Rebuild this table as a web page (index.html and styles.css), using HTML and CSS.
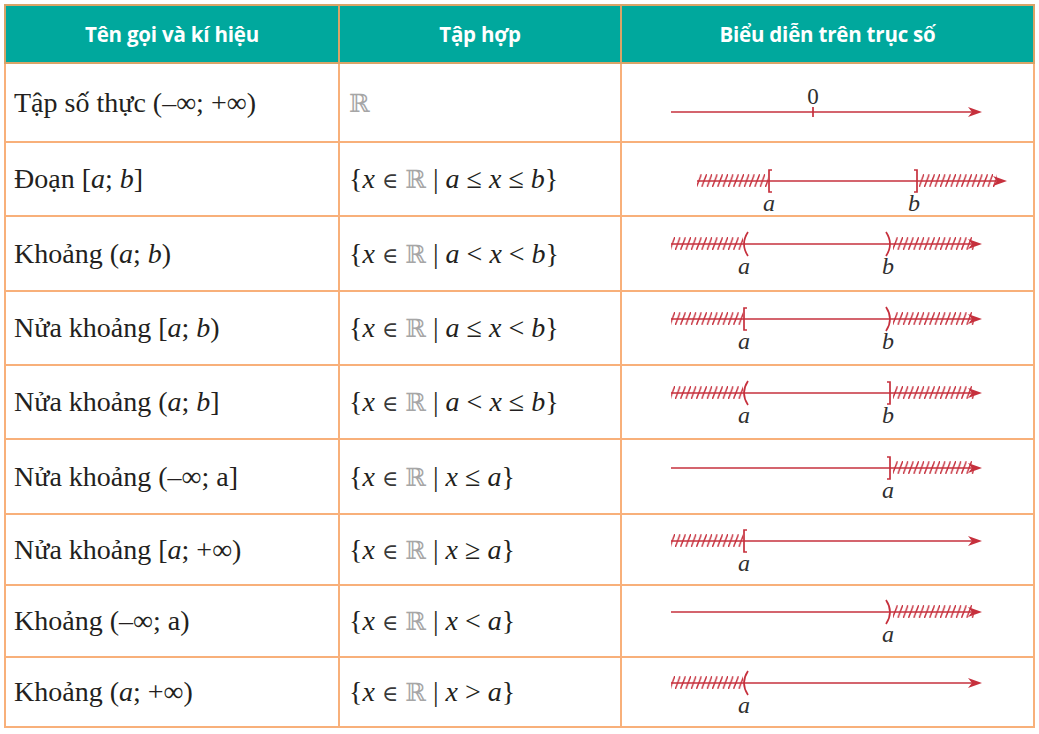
FILE: index.html
```html
<!DOCTYPE html>
<html lang="vi">
<head>
<meta charset="utf-8">
<title>Các tập con của tập số thực</title>
<link rel="stylesheet" href="styles.css">
</head>
<body>
<svg class="defs" width="0" height="0" aria-hidden="true">
  <defs>
    <pattern id="hatch" patternUnits="userSpaceOnUse" x="0" y="-7" width="5.3" height="13">
      <line class="hl" x1="0.5" y1="12.5" x2="5" y2="0.5"/>
    </pattern>
  </defs>
</svg>
<table class="tbl">
  <colgroup><col class="c1"><col class="c2"><col class="c3"></colgroup>
  <thead>
    <tr><th>Tên gọi và kí hiệu</th><th>Tập hợp</th><th>Biểu diễn trên trục số</th></tr>
  </thead>
  <tbody>
    <tr>
      <td class="name">Tập số thực (–∞; +∞)</td>
      <td class="set"><span class="bb">ℝ</span></td>
      <td class="axis">
        <svg class="nl" width="411" height="77" viewBox="0 0 411 77"><g transform="translate(0 48)">
          <line class="ax" x1="49" y1="0" x2="350" y2="0"/>
          <path class="ah" d="M360 0 L346 -5 L350 0 L346 5Z"/>
          <line class="ax" x1="191" y1="-5" x2="191" y2="5"/>
          <text class="zr" x="191" y="-8">0</text>
        </g></svg>
      </td>
    </tr>
    <tr>
      <td class="name">Đoạn [<i>a</i>; <i>b</i>]</td>
      <td class="set">{<i>x</i> <span class="el">∈</span> <span class="bb">ℝ</span> | <i>a</i> ≤ <i>x</i> ≤ <i>b</i>}</td>
      <td class="axis">
        <svg class="nl" width="411" height="72" viewBox="0 0 411 72"><g transform="translate(0 38)">
          <rect x="75" y="-7" width="71" height="13" fill="url(#hatch)"/>
          <rect x="297" y="-7" width="78" height="13" fill="url(#hatch)"/>
          <line class="ax" x1="75" y1="0" x2="375" y2="0"/>
          <path class="ah" d="M385 0 L371 -5 L375 0 L371 5Z"/>
          <path class="br" d="M150 -11 H147 V11 H150"/>
          <path class="br" d="M292 -11 H295 V11 H292"/>
          <text class="lb" x="147" y="30">a</text>
          <text class="lb" x="292" y="30">b</text>
        </g></svg>
      </td>
    </tr>
    <tr>
      <td class="name">Khoảng (<i>a</i>; <i>b</i>)</td>
      <td class="set">{<i>x</i> <span class="el">∈</span> <span class="bb">ℝ</span> | <i>a</i> &lt; <i>x</i> &lt; <i>b</i>}</td>
      <td class="axis">
        <svg class="nl" width="411" height="73" viewBox="0 0 411 73"><g transform="translate(0 27)">
          <rect x="49" y="-7" width="72" height="13" fill="url(#hatch)"/>
          <rect x="271" y="-7" width="81" height="13" fill="url(#hatch)"/>
          <line class="ax" x1="49" y1="0" x2="350" y2="0"/>
          <path class="ah" d="M360 0 L346 -5 L350 0 L346 5Z"/>
          <path class="br" d="M126 -12 Q118 0 126 12"/>
          <path class="br" d="M264 -12 Q272 0 264 12"/>
          <text class="lb" x="122" y="30">a</text>
          <text class="lb" x="266" y="30">b</text>
        </g></svg>
      </td>
    </tr>
    <tr>
      <td class="name">Nửa khoảng [<i>a</i>; <i>b</i>)</td>
      <td class="set">{<i>x</i> <span class="el">∈</span> <span class="bb">ℝ</span> | <i>a</i> ≤ <i>x</i> &lt; <i>b</i>}</td>
      <td class="axis">
        <svg class="nl" width="411" height="72" viewBox="0 0 411 72"><g transform="translate(0 27)">
          <rect x="49" y="-7" width="72" height="13" fill="url(#hatch)"/>
          <rect x="271" y="-7" width="81" height="13" fill="url(#hatch)"/>
          <line class="ax" x1="49" y1="0" x2="350" y2="0"/>
          <path class="ah" d="M360 0 L346 -5 L350 0 L346 5Z"/>
          <path class="br" d="M125 -11 H122 V11 H125"/>
          <path class="br" d="M264 -12 Q272 0 264 12"/>
          <text class="lb" x="122" y="30">a</text>
          <text class="lb" x="266" y="30">b</text>
        </g></svg>
      </td>
    </tr>
    <tr>
      <td class="name">Nửa khoảng (<i>a</i>; <i>b</i>]</td>
      <td class="set">{<i>x</i> <span class="el">∈</span> <span class="bb">ℝ</span> | <i>a</i> &lt; <i>x</i> ≤ <i>b</i>}</td>
      <td class="axis">
        <svg class="nl" width="411" height="72" viewBox="0 0 411 72"><g transform="translate(0 27)">
          <rect x="49" y="-7" width="72" height="13" fill="url(#hatch)"/>
          <rect x="271" y="-7" width="81" height="13" fill="url(#hatch)"/>
          <line class="ax" x1="49" y1="0" x2="350" y2="0"/>
          <path class="ah" d="M360 0 L346 -5 L350 0 L346 5Z"/>
          <path class="br" d="M126 -12 Q118 0 126 12"/>
          <path class="br" d="M265 -11 H268 V11 H265"/>
          <text class="lb" x="122" y="30">a</text>
          <text class="lb" x="266" y="30">b</text>
        </g></svg>
      </td>
    </tr>
    <tr>
      <td class="name">Nửa khoảng (–∞; a]</td>
      <td class="set">{<i>x</i> <span class="el">∈</span> <span class="bb">ℝ</span> | <i>x</i> ≤ <i>a</i>}</td>
      <td class="axis">
        <svg class="nl" width="411" height="73" viewBox="0 0 411 73"><g transform="translate(0 28)">
          <rect x="271" y="-7" width="81" height="13" fill="url(#hatch)"/>
          <line class="ax" x1="49" y1="0" x2="350" y2="0"/>
          <path class="ah" d="M360 0 L346 -5 L350 0 L346 5Z"/>
          <path class="br" d="M265 -11 H268 V11 H265"/>
          <text class="lb" x="266" y="30">a</text>
        </g></svg>
      </td>
    </tr>
    <tr>
      <td class="name">Nửa khoảng [<i>a</i>; +∞)</td>
      <td class="set">{<i>x</i> <span class="el">∈</span> <span class="bb">ℝ</span> | <i>x</i> ≥ <i>a</i>}</td>
      <td class="axis">
        <svg class="nl" width="411" height="69" viewBox="0 0 411 69"><g transform="translate(0 26)">
          <rect x="49" y="-7" width="72" height="13" fill="url(#hatch)"/>
          <line class="ax" x1="49" y1="0" x2="350" y2="0"/>
          <path class="ah" d="M360 0 L346 -5 L350 0 L346 5Z"/>
          <path class="br" d="M125 -11 H122 V11 H125"/>
          <text class="lb" x="122" y="30">a</text>
        </g></svg>
      </td>
    </tr>
    <tr>
      <td class="name">Khoảng (–∞; a)</td>
      <td class="set">{<i>x</i> <span class="el">∈</span> <span class="bb">ℝ</span> | <i>x</i> &lt; <i>a</i>}</td>
      <td class="axis">
        <svg class="nl" width="411" height="70" viewBox="0 0 411 70"><g transform="translate(0 26)">
          <rect x="271" y="-7" width="81" height="13" fill="url(#hatch)"/>
          <line class="ax" x1="49" y1="0" x2="350" y2="0"/>
          <path class="ah" d="M360 0 L346 -5 L350 0 L346 5Z"/>
          <path class="br" d="M264 -12 Q272 0 264 12"/>
          <text class="lb" x="266" y="30">a</text>
        </g></svg>
      </td>
    </tr>
    <tr>
      <td class="name">Khoảng (<i>a</i>; +∞)</td>
      <td class="set">{<i>x</i> <span class="el">∈</span> <span class="bb">ℝ</span> | <i>x</i> &gt; <i>a</i>}</td>
      <td class="axis">
        <svg class="nl" width="411" height="68" viewBox="0 0 411 68"><g transform="translate(0 25)">
          <rect x="49" y="-7" width="72" height="13" fill="url(#hatch)"/>
          <line class="ax" x1="49" y1="0" x2="350" y2="0"/>
          <path class="ah" d="M360 0 L346 -5 L350 0 L346 5Z"/>
          <path class="br" d="M126 -12 Q118 0 126 12"/>
          <text class="lb" x="122" y="30">a</text>
        </g></svg>
      </td>
    </tr>
  </tbody>
</table>
</body>
</html>
```

FILE: styles.css
```css
html, body {
  margin: 0;
  padding: 0;
  background: #ffffff;
}

.defs {
  display: block;
  width: 0;
  height: 0;
  overflow: hidden;
}

.tbl {
  margin: 4px 0 0 4px;
  border-collapse: collapse;
  table-layout: fixed;
  width: 1029px;
  border: 2px solid #f69c52;
}

.c1 { width: 334px; }
.c2 { width: 282px; }
.c3 { width: 413px; }

.tbl th {
  background: #00a89d;
  color: #ffffff;
  font-family: "Open Sans", "Noto Sans", sans-serif;
  font-weight: 700;
  font-size: 20.5px;
  letter-spacing: -0.2px;
  text-align: center;
  padding: 0;
  border: 2px solid #d9a468;
}

.tbl thead tr { height: 58px; }

.tbl td {
  border: 2px solid #f8b07a;
  padding: 0;
  vertical-align: middle;
  color: #231f20;
}

.tbl tbody tr:nth-child(1) { height: 79px; }
.tbl tbody tr:nth-child(2) { height: 74px; }
.tbl tbody tr:nth-child(3) { height: 75px; }
.tbl tbody tr:nth-child(4) { height: 74px; }
.tbl tbody tr:nth-child(5) { height: 74px; }
.tbl tbody tr:nth-child(6) { height: 75px; }
.tbl tbody tr:nth-child(7) { height: 71px; }
.tbl tbody tr:nth-child(8) { height: 72px; }
.tbl tbody tr:nth-child(9) { height: 70px; }

.name {
  padding-left: 8px !important;
  font-family: "Liberation Serif", "DejaVu Serif", serif;
  font-size: 28px;
  white-space: nowrap;
}

.set {
  padding-left: 9px !important;
  font-family: "Liberation Serif", "DejaVu Serif", serif;
  font-size: 28px;
  white-space: nowrap;
}

.el {
  font-family: "DejaVu Serif", serif;
  font-size: 22px;
  color: #3a3a3a;
}

.bb {
  font-family: "DejaVu Serif", serif;
  font-size: 25px;
  color: #a6a6a6;
}

.axis {
  vertical-align: top !important;
}

.nl {
  display: block;
}

.ax {
  stroke: #c6303d;
  stroke-width: 1.7;
}

.ah {
  fill: #c6303d;
}

.br {
  fill: none;
  stroke: #c6303d;
  stroke-width: 1.7;
}

.hl {
  stroke: #c6303d;
  stroke-width: 1.4;
  stroke-linecap: round;
}

.lb {
  font-family: "Liberation Serif", "DejaVu Serif", serif;
  font-style: italic;
  font-size: 24px;
  fill: #2f2f2f;
  text-anchor: middle;
}

.zr {
  font-family: "Liberation Serif", "DejaVu Serif", serif;
  font-size: 23px;
  fill: #2f2f2f;
  text-anchor: middle;
}
```
